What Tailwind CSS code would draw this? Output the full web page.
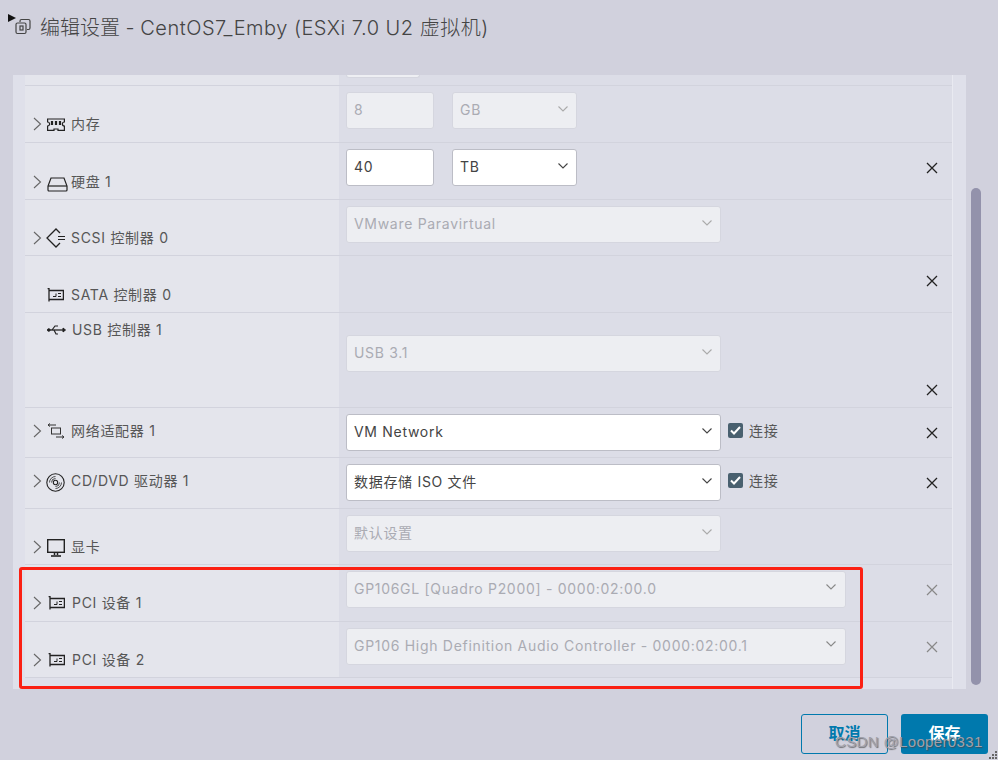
<!DOCTYPE html>
<html lang="en">
<head>
  <meta charset="UTF-8">
  <title>编辑设置</title>
  <script src="https://cdn.jsdelivr.net/npm/@tailwindcss/browser@4"></script>
</head>
<body class="relative w-[998px] h-[760px] overflow-hidden bg-[#d1d1dd] text-[#565656] font-['Inter','Noto_Sans_CJK_SC',sans-serif]">

  <!-- Header -->
  <header class="h-[75px] flex items-start pt-[16px] pl-[15px] gap-[9px]">
    <svg class="w-[16px] h-[17px] mt-[2px]" viewBox="0 0 16 17" fill="none" stroke="#444" stroke-width="1.2"><path d="M5 4V3a1.5 1.5 0 0 1 1.5-1.5h7A1.5 1.5 0 0 1 15 3v7a1.5 1.5 0 0 1-1.5 1.5H12"/><rect x="1" y="5" width="10" height="10.5" rx="1.5"/><rect x="5" y="8" width="3" height="4"/></svg>
    <h1 class="text-[20px] leading-[24px] font-light text-[#444]">编辑设置 - <span class="tracking-[0.5px]">CentOS7_Emby (ESXi 7.0 U2 虚拟机)</span></h1>
  </header>

  <!-- Scroll area -->
  <main class="flex h-[614px]">
    <div class="ml-[13px] w-[953px] h-full bg-[#dfe0ea] pl-[12px] overflow-hidden text-[14px] tracking-[0.7px]">
      <div class="w-[928px] h-full border-r border-[#e9eaf1]">

        <!-- Cut off row -->
        <div class="flex h-[11px] border-b border-[#d2d3dd]">
          <div class="w-[314px] bg-[#e4e5ec]"></div>
          <div class="flex-1 bg-[#dcdde7] pl-[7px]"><div class="w-[74px] h-[3px] bg-[#eeeff3] border-b border-x border-[#d5d6df] rounded-b-[3px]"></div></div>
        </div>

        <!-- Memory -->
        <div class="flex h-[57px] border-b border-[#d2d3dd]">
          <div class="w-[314px] bg-[#e4e5ec] flex items-start pt-[28px] pl-[8px]">
            <svg class="w-[9px] h-[14px] mt-[3px]" viewBox="0 0 9 14" fill="none" stroke="#666" stroke-width="1.1"><path d="M1 1l6.5 6L1 13"/></svg>
            <svg class="w-[18px] h-[13px] ml-[5px] mt-[4px]" viewBox="0 0 18 13" fill="none" stroke="#222" stroke-width="1.2"><path d="M.6 1h16.8v3a2 2 0 0 0 0 4v4.4H11v-1.4H7v1.4H.6V8a2 2 0 0 0 0-4z"/><path d="M5 3v4M9 3v4M13 3v4" stroke-width="2.2"/></svg>
            <span class="ml-[6px] leading-[20px]">内存</span>
          </div>
          <div class="flex-1 bg-[#dcdde7] pl-[7px] pt-[6px] flex gap-[18px] items-start text-[#aaabb3]">
            <div class="w-[88px] h-[37px] bg-[#edeef2] border border-[#d5d6df] rounded-[3px] px-[7px] leading-[34px]">8</div>
            <div class="w-[125px] h-[37px] bg-[#edeef2] border border-[#d5d6df] rounded-[3px] px-[7px] leading-[34px] flex justify-between">GB
              <svg class="w-[10px] h-[6px] mt-[13px] mr-[1px]" viewBox="0 0 10 6" fill="none" stroke="#aaa" stroke-width="1.1"><path d="M.5.5L5 5 9.5.5"/></svg>
            </div>
          </div>
        </div>

        <!-- Disk -->
        <div class="flex h-[57px] border-b border-[#d2d3dd]">
          <div class="w-[314px] bg-[#e4e5ec] flex items-start pt-[29px] pl-[8px]">
            <svg class="w-[9px] h-[14px] mt-[3px]" viewBox="0 0 9 14" fill="none" stroke="#666" stroke-width="1.1"><path d="M1 1l6.5 6L1 13"/></svg>
            <svg class="w-[21px] h-[15px] ml-[5px] mt-[5px]" viewBox="0 0 21 15" fill="none" stroke="#222" stroke-width="1.2"><path d="M4 1h13l3 8v4a1 1 0 0 1-1 1H2a1 1 0 0 1-1-1V9z"/><path d="M1 9h19"/></svg>
            <span class="ml-[3px] leading-[20px]">硬盘 1</span>
          </div>
          <div class="flex-1 bg-[#dcdde7] pl-[7px] pt-[6px] flex gap-[18px] items-start text-[#444]">
            <div class="w-[88px] h-[37px] bg-white border border-[#bcbdc6] rounded-[3px] px-[7px] leading-[34px]">40</div>
            <div class="w-[125px] h-[37px] bg-white border border-[#bcbdc6] rounded-[3px] px-[7px] leading-[34px] flex justify-between">TB
              <svg class="w-[10px] h-[6px] mt-[13px] mr-[1px]" viewBox="0 0 10 6" fill="none" stroke="#444" stroke-width="1.1"><path d="M.5.5L5 5 9.5.5"/></svg>
            </div>
            <svg class="w-[12px] h-[12px] ml-auto mr-[14px] mt-[13px]" viewBox="0 0 12 12" stroke="#222" stroke-width="1.3"><path d="M1 1l10 10M11 1L1 11"/></svg>
          </div>
        </div>

        <!-- SCSI -->
        <div class="flex h-[56px] border-b border-[#d2d3dd]">
          <div class="w-[314px] bg-[#e4e5ec] flex items-start pt-[28px] pl-[8px]">
            <svg class="w-[9px] h-[14px] mt-[3px]" viewBox="0 0 9 14" fill="none" stroke="#666" stroke-width="1.1"><path d="M1 1l6.5 6L1 13"/></svg>
            <svg class="w-[20px] h-[20px] ml-[4px]" viewBox="0 0 20 20" fill="none" stroke="#222" stroke-width="1.3"><path d="M14 5l-4-4-9 9 9 9 4-4"/><path d="M12 8.5h7M12 11.5h7" stroke-width="1"/></svg>
            <span class="ml-[5px] leading-[20px]">SCSI 控制器 0</span>
          </div>
          <div class="flex-1 bg-[#dcdde7] pl-[7px] pt-[6px] text-[#aaabb3]">
            <div class="w-[375px] h-[37px] bg-[#edeef2] border border-[#d5d6df] rounded-[3px] px-[7px] leading-[34px] flex justify-between">VMware Paravirtual
              <svg class="w-[10px] h-[6px] mt-[13px] mr-[1px]" viewBox="0 0 10 6" fill="none" stroke="#aaa" stroke-width="1.1"><path d="M.5.5L5 5 9.5.5"/></svg>
            </div>
          </div>
        </div>

        <!-- SATA -->
        <div class="flex h-[57px] border-b border-[#d2d3dd]">
          <div class="w-[314px] bg-[#e4e5ec] flex items-start pt-[29px] pl-[22px]">
            <svg class="w-[17px] h-[14px] mt-[3px]" viewBox="0 0 17 14" fill="none" stroke="#222" stroke-width="1.3"><path d="M.6 .6h1.4v13"/><path d="M2 2.5h14.4v9H2"/><path d="M6 8.5h3V5.5M11 5.5h3M11 8.5h3" stroke-width="1"/></svg>
            <span class="ml-[7px] leading-[20px]">SATA 控制器 0</span>
          </div>
          <div class="flex-1 bg-[#dcdde7] flex justify-end items-start">
            <svg class="w-[12px] h-[12px] mr-[14px] mt-[19px]" viewBox="0 0 12 12" stroke="#222" stroke-width="1.3"><path d="M1 1l10 10M11 1L1 11"/></svg>
          </div>
        </div>

        <!-- USB -->
        <div class="flex h-[95px] border-b border-[#d2d3dd]">
          <div class="w-[314px] bg-[#e4e5ec] flex items-start pt-[7px] pl-[22px]">
            <svg class="w-[19px] h-[12px] mt-[4px]" viewBox="0 0 19 12" fill="#222" stroke="#222"><circle cx="1.8" cy="6" r="1.3"/><path d="M2 6h15" stroke-width="1.3"/><path d="M16 4l2.5 2-2.5 2z"/><path d="M5 6l3-4h3M7 6l2 4h2" fill="none" stroke-width="1.2"/></svg>
            <span class="ml-[6px] leading-[20px]">USB 控制器 1</span>
          </div>
          <div class="flex-1 bg-[#dcdde7] pl-[7px] pt-[22px] flex items-start text-[#aaabb3]">
            <div class="w-[375px] h-[37px] bg-[#edeef2] border border-[#d5d6df] rounded-[3px] px-[7px] leading-[34px] flex justify-between">USB 3.1
              <svg class="w-[10px] h-[6px] mt-[13px] mr-[1px]" viewBox="0 0 10 6" fill="none" stroke="#aaa" stroke-width="1.1"><path d="M.5.5L5 5 9.5.5"/></svg>
            </div>
            <svg class="w-[12px] h-[12px] ml-auto mr-[14px] mt-[49px]" viewBox="0 0 12 12" stroke="#222" stroke-width="1.3"><path d="M1 1l10 10M11 1L1 11"/></svg>
          </div>
        </div>

        <!-- Network -->
        <div class="flex h-[50px] border-b border-[#d2d3dd]">
          <div class="w-[314px] bg-[#e4e5ec] flex items-start pt-[13px] pl-[8px]">
            <svg class="w-[9px] h-[14px] mt-[3px]" viewBox="0 0 9 14" fill="none" stroke="#666" stroke-width="1.1"><path d="M1 1l6.5 6L1 13"/></svg>
            <svg class="w-[18px] h-[16px] ml-[5px] mt-[2px]" viewBox="0 0 18 16" fill="none" stroke="#333" stroke-width="1"><path d="M9 2H1M3 .5L1 2l2 1.5M9 14h8M15 12.5l2 1.5-2 1.5"/><rect x="4.5" y="5" width="9" height="6"/></svg>
            <span class="ml-[6px] leading-[20px]">网络适配器 1</span>
          </div>
          <div class="flex-1 bg-[#dcdde7] pl-[7px] pt-[6px] flex items-start text-[#444]">
            <div class="w-[375px] h-[37px] bg-white border border-[#bcbdc6] rounded-[3px] px-[7px] leading-[34px] flex justify-between">VM Network
              <svg class="w-[10px] h-[6px] mt-[13px] mr-[1px]" viewBox="0 0 10 6" fill="none" stroke="#444" stroke-width="1.1"><path d="M.5.5L5 5 9.5.5"/></svg>
            </div>
            <div class="ml-[7px] mt-[9px] w-[15px] h-[15px] bg-[#49606f] rounded-[2px] flex items-center justify-center">
              <svg class="w-[11px] h-[9px]" viewBox="0 0 11 9" fill="none" stroke="#fff" stroke-width="2"><path d="M1 4.5L4 7.5 10 1"/></svg>
            </div>
            <span class="ml-[6px] mt-[7px] leading-[20px] text-[#565656]">连接</span>
            <svg class="w-[12px] h-[12px] ml-auto mr-[14px] mt-[13px]" viewBox="0 0 12 12" stroke="#222" stroke-width="1.3"><path d="M1 1l10 10M11 1L1 11"/></svg>
          </div>
        </div>

        <!-- CD/DVD -->
        <div class="flex h-[51px] border-b border-[#d2d3dd]">
          <div class="w-[314px] bg-[#e4e5ec] flex items-start pt-[13px] pl-[8px]">
            <svg class="w-[9px] h-[14px] mt-[3px]" viewBox="0 0 9 14" fill="none" stroke="#666" stroke-width="1.1"><path d="M1 1l6.5 6L1 13"/></svg>
            <svg class="w-[19px] h-[19px] ml-[4px] mt-[2px]" viewBox="0 0 19 19" fill="none" stroke="#222" stroke-width="1.1"><circle cx="9.5" cy="9.5" r="8.7"/><circle cx="9.5" cy="9.5" r="2.2"/><path d="M3.5 9.5a6 6 0 0 1 6-6M5.5 9.5a4 4 0 0 1 4-4M15.5 9.5a6 6 0 0 1-6 6M13.5 9.5a4 4 0 0 1-4 4" stroke-width=".8"/></svg>
            <span class="ml-[6px] leading-[20px]">CD/DVD 驱动器 1</span>
          </div>
          <div class="flex-1 bg-[#dcdde7] pl-[7px] pt-[6px] flex items-start text-[#444]">
            <div class="w-[375px] h-[37px] bg-white border border-[#bcbdc6] rounded-[3px] px-[7px] leading-[34px] flex justify-between">数据存储 ISO 文件
              <svg class="w-[10px] h-[6px] mt-[13px] mr-[1px]" viewBox="0 0 10 6" fill="none" stroke="#444" stroke-width="1.1"><path d="M.5.5L5 5 9.5.5"/></svg>
            </div>
            <div class="ml-[7px] mt-[9px] w-[15px] h-[15px] bg-[#49606f] rounded-[2px] flex items-center justify-center">
              <svg class="w-[11px] h-[9px]" viewBox="0 0 11 9" fill="none" stroke="#fff" stroke-width="2"><path d="M1 4.5L4 7.5 10 1"/></svg>
            </div>
            <span class="ml-[6px] mt-[7px] leading-[20px] text-[#565656]">连接</span>
            <svg class="w-[12px] h-[12px] ml-auto mr-[14px] mt-[13px]" viewBox="0 0 12 12" stroke="#222" stroke-width="1.3"><path d="M1 1l10 10M11 1L1 11"/></svg>
          </div>
        </div>

        <!-- Video card -->
        <div class="flex h-[56px] border-b border-[#d2d3dd]">
          <div class="w-[314px] bg-[#e4e5ec] flex items-start pt-[28px] pl-[8px]">
            <svg class="w-[9px] h-[14px] mt-[3px]" viewBox="0 0 9 14" fill="none" stroke="#666" stroke-width="1.1"><path d="M1 1l6.5 6L1 13"/></svg>
            <svg class="w-[18px] h-[18px] ml-[5px] mt-[2px]" viewBox="0 0 18 18" fill="none" stroke="#222" stroke-width="1.4"><rect x=".7" y=".7" width="16.6" height="12.6"/><path d="M7.5 14v2M10.5 14v2" stroke-width="1.5"/><path d="M4 17h10" stroke-width="1.6"/></svg>
            <span class="ml-[6px] leading-[20px]">显卡</span>
          </div>
          <div class="flex-1 bg-[#dcdde7] pl-[7px] pt-[6px] text-[#aaabb3]">
            <div class="w-[375px] h-[37px] bg-[#edeef2] border border-[#d5d6df] rounded-[3px] px-[7px] leading-[34px] flex justify-between">默认设置
              <svg class="w-[10px] h-[6px] mt-[13px] mr-[1px]" viewBox="0 0 10 6" fill="none" stroke="#aaa" stroke-width="1.1"><path d="M.5.5L5 5 9.5.5"/></svg>
            </div>
          </div>
        </div>

        <!-- PCI 1 -->
        <div class="flex h-[57px] border-b border-[#d2d3dd]">
          <div class="w-[314px] bg-[#e4e5ec] flex items-start pt-[28px] pl-[8px]">
            <svg class="w-[9px] h-[14px] mt-[3px]" viewBox="0 0 9 14" fill="none" stroke="#666" stroke-width="1.1"><path d="M1 1l6.5 6L1 13"/></svg>
            <svg class="w-[17px] h-[14px] ml-[6px] mt-[3px]" viewBox="0 0 17 14" fill="none" stroke="#222" stroke-width="1.3"><path d="M.6 .6h1.4v13"/><path d="M2 2.5h14.4v9H2"/><path d="M6 8.5h3V5.5M11 5.5h3M11 8.5h3" stroke-width="1"/></svg>
            <span class="ml-[7px] leading-[20px]">PCI 设备 1</span>
          </div>
          <div class="flex-1 bg-[#dcdde7] pl-[7px] pt-[6px] flex items-start text-[#aaabb3]">
            <div class="w-[500px] h-[37px] bg-[#edeef2] border border-[#d5d6df] rounded-[3px] px-[7px] leading-[34px] flex justify-between">GP106GL [Quadro P2000] - 0000:02:00.0
              <svg class="w-[10px] h-[6px] mt-[12px] mr-[2px]" viewBox="0 0 10 6" fill="none" stroke="#888" stroke-width="1.1"><path d="M.5.5L5 5 9.5.5"/></svg>
            </div>
            <svg class="w-[12px] h-[12px] ml-auto mr-[14px] mt-[13px]" viewBox="0 0 12 12" stroke="#888" stroke-width="1.2"><path d="M1 1l10 10M11 1L1 11"/></svg>
          </div>
        </div>

        <!-- PCI 2 -->
        <div class="flex h-[56px] border-b border-[#d2d3dd]">
          <div class="w-[314px] bg-[#e4e5ec] flex items-start pt-[28px] pl-[8px]">
            <svg class="w-[9px] h-[14px] mt-[3px]" viewBox="0 0 9 14" fill="none" stroke="#666" stroke-width="1.1"><path d="M1 1l6.5 6L1 13"/></svg>
            <svg class="w-[17px] h-[14px] ml-[6px] mt-[3px]" viewBox="0 0 17 14" fill="none" stroke="#222" stroke-width="1.3"><path d="M.6 .6h1.4v13"/><path d="M2 2.5h14.4v9H2"/><path d="M6 8.5h3V5.5M11 5.5h3M11 8.5h3" stroke-width="1"/></svg>
            <span class="ml-[7px] leading-[20px]">PCI 设备 2</span>
          </div>
          <div class="flex-1 bg-[#dcdde7] pl-[7px] pt-[6px] flex items-start text-[#aaabb3]">
            <div class="w-[500px] h-[37px] bg-[#edeef2] border border-[#d5d6df] rounded-[3px] px-[7px] leading-[34px] flex justify-between">GP106 High Definition Audio Controller - 0000:02:00.1
              <svg class="w-[10px] h-[6px] mt-[12px] mr-[2px]" viewBox="0 0 10 6" fill="none" stroke="#888" stroke-width="1.1"><path d="M.5.5L5 5 9.5.5"/></svg>
            </div>
            <svg class="w-[12px] h-[12px] ml-auto mr-[14px] mt-[13px]" viewBox="0 0 12 12" stroke="#888" stroke-width="1.2"><path d="M1 1l10 10M11 1L1 11"/></svg>
          </div>
        </div>
      </div>
    </div>

    <!-- Scrollbar -->
    <div class="ml-[5px] w-[10px] pt-[113px] pb-[4px]">
      <div class="h-full bg-[#9392ab] rounded-full"></div>
    </div>
  </main>

  <!-- Footer -->
  <footer class="flex justify-end gap-[13px] pt-[25px] pr-[10px] text-[16px] font-bold">
    <button class="w-[87px] h-[40px] border border-[#0079ad] rounded-[3px] text-[#0079ad] pb-[2px]">取消</button>
    <button class="w-[87px] h-[40px] bg-[#0079ad] rounded-[3px] text-white pb-[2px]">保存</button>
  </footer>

  <!-- Overlays: cursor, annotation box, watermark, resize grip -->
  <div class="absolute left-[8px] top-[14px] w-0 h-0 border-y-[4px] border-y-transparent border-l-[8px] border-l-[#111]"></div>
  <div class="absolute left-[19px] top-[567px] w-[844px] h-[122px] border-[3px] border-[#fb2013] rounded-[3px]"></div>
  <div class="absolute left-[835px] top-[733px] text-[15px] leading-[18px] text-[#a0a0aa] tracking-[0.35px] [text-shadow:1px_1px_1px_rgba(70,70,70,0.7)] font-['Liberation_Sans',sans-serif]">CSDN @Looper0331</div>
  <div class="absolute right-[1px] bottom-[1px] grid grid-cols-3 gap-[1px]">
    <span></span><span></span><span class="w-[2px] h-[2px] bg-[#666]"></span>
    <span></span><span class="w-[2px] h-[2px] bg-[#666]"></span><span class="w-[2px] h-[2px] bg-[#666]"></span>
    <span class="w-[2px] h-[2px] bg-[#666]"></span><span class="w-[2px] h-[2px] bg-[#666]"></span><span class="w-[2px] h-[2px] bg-[#666]"></span>
  </div>
</body>
</html>
